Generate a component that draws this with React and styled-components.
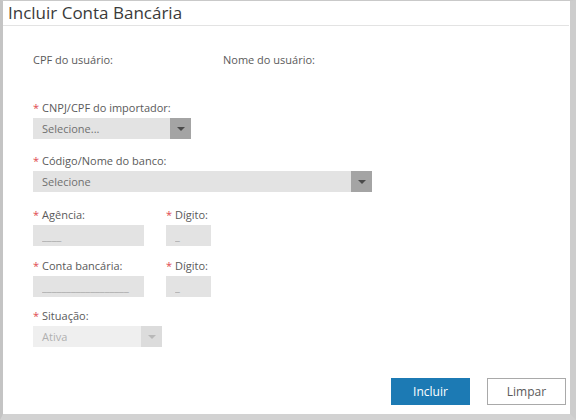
import React from 'react';
import styled, { createGlobalStyle } from 'styled-components';

const GlobalStyle = createGlobalStyle`
  html, body {
    margin: 0;
    padding: 0;
    background: #ffffff;
  }
  body {
    font-family: 'Open Sans', 'Liberation Sans', sans-serif;
  }
`;

const Frame = styled.div`
  box-sizing: border-box;
  width: 576px;
  height: 420px;
  display: flex;
  flex-direction: column;
  background: #fff;
  border-top: 1px solid #c9c9c9;
  border-left: 3px solid #c4c4c4;
  border-right: 6px solid #cdcdcd;
  border-bottom: 6px solid #d2d2d2;
`;

const Header = styled.div`
  height: 24px;
  display: flex;
  align-items: center;
  padding-left: 5px;
  border-bottom: 1px solid #e3e3e3;
  margin-right: 1px;
`;

const Title = styled.h1`
  margin: 0;
  font-size: 17px;
  font-weight: 400;
  color: #3a3a3a;
  line-height: 22px;
`;

const Body = styled.div`
  flex: 1;
  display: flex;
  flex-direction: column;
  padding: 26px 0 0 30px;
`;

const InfoRow = styled.div`
  display: flex;
  height: 15px;
`;

const InfoText = styled.span`
  width: ${(p) => p.width || 'auto'};
  font-size: 11px;
  line-height: 15px;
  color: #5a5a5a;
`;

const Row = styled.div`
  display: flex;
  gap: 22px;
  margin-top: ${(p) => p.top}px;
`;

const Field = styled.div`
  display: flex;
  flex-direction: column;
`;

const Label = styled.label`
  font-size: 11px;
  line-height: 15px;
  color: #5a5a5a;
  margin-bottom: 3px;
  white-space: nowrap;
`;

const Required = styled.span`
  color: #e0494f;
  margin-right: 3px;
`;

const SelectBox = styled.div`
  box-sizing: border-box;
  width: ${(p) => p.width}px;
  height: 21px;
  display: flex;
  background: ${(p) => (p.disabled ? '#efefef' : '#e3e3e3')};
`;

const SelectText = styled.span`
  flex: 1;
  padding-left: 9px;
  font-size: 11px;
  line-height: 21px;
  color: ${(p) => (p.disabled ? '#b0b0b0' : '#707070')};
`;

const Arrow = styled.span`
  width: 21px;
  height: 21px;
  display: flex;
  align-items: center;
  justify-content: center;
  background: ${(p) => (p.disabled ? '#dcdcdc' : '#a4a4a4')};

  &::after {
    content: '';
    border-left: 4px solid transparent;
    border-right: 4px solid transparent;
    border-top: 4px solid ${(p) => (p.disabled ? '#b8b8b8' : '#4a4a4a')};
    margin-top: 1px;
  }
`;

const Input = styled.input`
  box-sizing: border-box;
  width: ${(p) => p.width}px;
  height: 21px;
  border: none;
  outline: none;
  background: #e3e3e3;
  padding: 0 0 0 9px;
  font-family: inherit;
  font-size: 11px;
  color: #a8a8a8;
  line-height: 21px;
`;

const Footer = styled.div`
  margin-top: auto;
  display: flex;
  justify-content: flex-end;
  gap: 17px;
  padding: 0 4px 9px 0;
`;

const Button = styled.button`
  box-sizing: border-box;
  width: 79px;
  height: 27px;
  font-family: inherit;
  font-size: 12px;
  cursor: pointer;
  background: ${(p) => (p.primary ? '#1c7ab4' : '#ffffff')};
  color: ${(p) => (p.primary ? '#ffffff' : '#5a5a5a')};
  border: 1px solid ${(p) => (p.primary ? '#1c7ab4' : '#a9a9a9')};
`;

const Select = ({ width, text, disabled }) => (
  <SelectBox width={width} disabled={disabled}>
    <SelectText disabled={disabled}>{text}</SelectText>
    <Arrow disabled={disabled} />
  </SelectBox>
);

const RequiredLabel = ({ children }) => (
  <Label>
    <Required>*</Required>
    {children}
  </Label>
);

const App = () => {
  return (
    <>
      <GlobalStyle />
      <Frame>
        <Header>
          <Title>Incluir Conta Bancária</Title>
        </Header>
        <Body>
          <InfoRow>
            <InfoText width="190px">CPF do usuário:</InfoText>
            <InfoText>Nome do usuário:</InfoText>
          </InfoRow>

          <Row top={33}>
            <Field>
              <RequiredLabel>CNPJ/CPF do importador:</RequiredLabel>
              <Select width={158} text="Selecione..." />
            </Field>
          </Row>

          <Row top={14}>
            <Field>
              <RequiredLabel>Código/Nome do banco:</RequiredLabel>
              <Select width={339} text="Selecione" />
            </Field>
          </Row>

          <Row top={15}>
            <Field>
              <RequiredLabel>Agência:</RequiredLabel>
              <Input width={111} defaultValue="____" readOnly />
            </Field>
            <Field>
              <RequiredLabel>Dígito:</RequiredLabel>
              <Input width={45} defaultValue="_" readOnly />
            </Field>
          </Row>

          <Row top={12}>
            <Field>
              <RequiredLabel>Conta bancária:</RequiredLabel>
              <Input width={111} defaultValue="__________________" readOnly />
            </Field>
            <Field>
              <RequiredLabel>Dígito:</RequiredLabel>
              <Input width={45} defaultValue="_" readOnly />
            </Field>
          </Row>

          <Row top={11}>
            <Field>
              <RequiredLabel>Situação:</RequiredLabel>
              <Select width={129} text="Ativa" disabled />
            </Field>
          </Row>

          <Footer>
            <Button primary>Incluir</Button>
            <Button>Limpar</Button>
          </Footer>
        </Body>
      </Frame>
    </>
  );
};

export default App;
